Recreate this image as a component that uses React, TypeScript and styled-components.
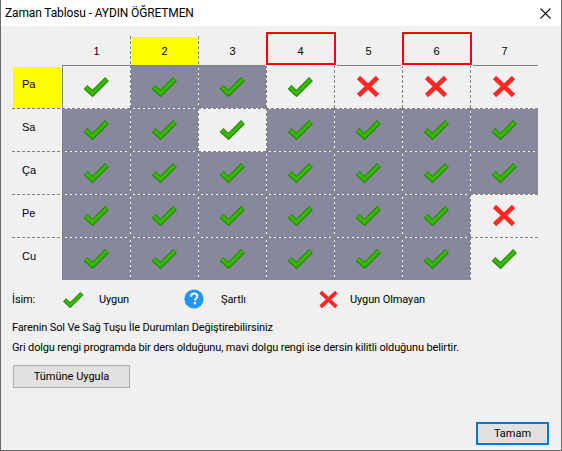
import React from 'react';
import styled, { createGlobalStyle } from 'styled-components';

const GlobalStyle = createGlobalStyle`
  html, body {
    margin: 0;
    padding: 0;
    background: #f0f0f0;
  }
`;

const DAYS = ['Pa', 'Sa', 'Ça', 'Pe', 'Cu'];
const HOURS = [1, 2, 3, 4, 5, 6, 7];

// g: check on grey, c: check on plain, x: red cross
const STATES = ['cggcxxx', 'ggcgggg', 'ggggggg', 'ggggggx', 'ggggggc'];

const dashedV = 'repeating-linear-gradient(to bottom, #808080 0 3px, #fff 3px 5px)';
const dashedH = 'repeating-linear-gradient(to right, #808080 0 3px, #fff 3px 5px)';
const dashedPlain = 'repeating-linear-gradient(to right, #808080 0 3px, #f0f0f0 3px 5px)';
const dashedHeader = 'repeating-linear-gradient(to bottom, #808080 0 3px, #f0f0f0 3px 5px)';
const solid = 'linear-gradient(#808080, #808080)';

const CheckIcon: React.FC<{ small?: boolean }> = ({ small }) => (
  <svg width={small ? 22 : 26} height={small ? 17 : 21} viewBox="0 0 26 21" fill="none">
    <path d="M2.5 11 L9.5 17.5 L24 3" stroke="#1f8a00" strokeWidth="5.4" />
    <path d="M3 11.2 L9.5 17.2 L23.6 3.4" stroke="#38b800" strokeWidth="3.2" />
  </svg>
);

const CrossIcon: React.FC<{ small?: boolean }> = ({ small }) => (
  <svg width={small ? 21 : 24} height={small ? 19 : 23} viewBox="0 0 24 23" fill="none">
    <path d="M2.5 2.5 L21.5 20.5 M21.5 2.5 L2.5 20.5" stroke="#ff2626" strokeWidth="4.6" />
  </svg>
);

const HelpIcon = () => (
  <svg width="20" height="20" viewBox="0 0 20 20">
    <circle cx="10" cy="10" r="9.6" fill="#2196f3" />
    <path
      d="M6.9 7.6 C7 5.6 8.4 4.6 10.2 4.6 C12 4.6 13.3 5.7 13.3 7.3 C13.3 9.4 10.9 9.6 10.9 11.6"
      fill="none"
      stroke="#fff"
      strokeWidth="2"
    />
    <rect x="9.7" y="13" width="2.3" height="2.3" fill="#fff" />
  </svg>
);

const App: React.FC = () => {
  return (
    <Dialog>
      <GlobalStyle />
      <TitleBar>
        <Title>Zaman Tablosu - AYDIN ÖĞRETMEN</Title>
        <CloseButton>
          <svg width="11" height="11" viewBox="0 0 11 11">
            <path d="M0.5 0.5 L10.5 10.5 M10.5 0.5 L0.5 10.5" stroke="#111" strokeWidth="1.1" />
          </svg>
        </CloseButton>
      </TitleBar>

      <Body>
        <Table>
          <Corner />
          {HOURS.map((hour) => (
            <HourCell key={hour} $selected={hour === 2}>
              <HourLabel $selected={hour === 2}>{hour}</HourLabel>
              {(hour === 4 || hour === 6) && <RedFrame />}
            </HourCell>
          ))}
          {DAYS.map((day, row) => (
            <React.Fragment key={day}>
              <DayCell $first={row === 0}>
                <DayLabel $selected={row === 0}>{day}</DayLabel>
              </DayCell>
              {STATES[row].split('').map((state, col) => (
                <Cell key={col} $row={row} $col={col} $grey={state === 'g'}>
                  {state === 'x' ? <CrossIcon /> : <CheckIcon />}
                </Cell>
              ))}
            </React.Fragment>
          ))}
        </Table>

        <Legend>
          <LegendText>İsim:</LegendText>
          <CheckIcon small />
          <LegendText>Uygun</LegendText>
          <HelpIcon />
          <LegendText>Şartlı</LegendText>
          <CrossIcon small />
          <LegendText>Uygun Olmayan</LegendText>
        </Legend>

        <Note>Farenin Sol Ve Sağ Tuşu İle Durumları Değiştirebilirsiniz</Note>
        <Note $second>Gri dolgu rengi programda bir ders olduğunu, mavi dolgu rengi ise dersin kilitli olduğunu belirtir.</Note>

        <ApplyButton>Tümüne Uygula</ApplyButton>

        <Footer>
          <OkButton>Tamam</OkButton>
        </Footer>
      </Body>
    </Dialog>
  );
};

const Dialog = styled.div`
  box-sizing: border-box;
  width: 562px;
  height: 451px;
  display: flex;
  flex-direction: column;
  border: 1px solid #6a6a6a;
  border-top: none;
  background: #f0f0f0;
  color: #000;
  font-family: Roboto, sans-serif;
  overflow: hidden;
`;

const TitleBar = styled.div`
  height: 26px;
  flex: none;
  display: flex;
  align-items: center;
  justify-content: space-between;
  padding: 0 10px 0 4px;
  background: #fff;
`;

const Title = styled.div`
  font-size: 12px;
  letter-spacing: -0.13px;
  margin-top: -1px;
`;

const CloseButton = styled.div`
  display: flex;
  align-items: center;
`;

const Body = styled.div`
  flex: 1;
  display: flex;
  flex-direction: column;
  padding: 10px 12px 5px 11px;
  min-height: 0;
`;

const Table = styled.div`
  display: grid;
  grid-template-columns: 50px repeat(7, 68px);
  grid-template-rows: 29px repeat(5, 43px);
  font-family: 'Liberation Sans', sans-serif;
  font-size: 11px;
`;

const Corner = styled.div``;

const HourCell = styled.div<{ $selected: boolean }>`
  position: relative;
  display: flex;
  padding: 1px 0 0 1px;
  ${({ $selected }) =>
    $selected &&
    `background: ${dashedHeader} left top/1px 100% no-repeat, ${dashedHeader} right top/1px 100% no-repeat;
     margin-right: -1px;
     padding-right: 2px;
     padding-left: 2px;`}
`;

const HourLabel = styled.div<{ $selected: boolean }>`
  flex: 1;
  display: flex;
  align-items: center;
  justify-content: center;
  background: ${({ $selected }) => ($selected ? '#ffff00' : 'transparent')};
`;

const RedFrame = styled.div`
  position: absolute;
  left: 0;
  top: -4px;
  width: 70px;
  height: 33px;
  box-sizing: border-box;
  border: 2px solid #f00;
  box-shadow: 0 0 0 1px #fff;
`;

const DayCell = styled.div<{ $first: boolean }>`
  display: flex;
  padding: 2px 1px 0 1px;
  background: ${({ $first }) => ($first ? 'none' : `${dashedPlain} left top/100% 1px no-repeat`)};
`;

const DayLabel = styled.div<{ $selected: boolean }>`
  flex: 1;
  padding: 0 0 7px 9px;
  display: flex;
  align-items: center;
  background: ${({ $selected }) => ($selected ? '#ffff00' : 'transparent')};
`;

const Cell = styled.div<{ $row: number; $col: number; $grey: boolean }>`
  display: flex;
  align-items: center;
  justify-content: center;
  background:
    ${({ $col }) => ($col === 0 ? solid : dashedV)} left top/1px 100% no-repeat,
    ${({ $row }) => ($row === 0 ? solid : dashedH)} left top/100% 1px no-repeat,
    ${({ $grey }) => ($grey ? '#88889c' : '#f0f0f0')};
`;

const Legend = styled.div`
  display: grid;
  grid-template-columns: 50px 37px 85px 37px 97px 32px auto;
  align-items: center;
  justify-items: start;
  margin-top: 9px;
  height: 20px;
`;

const LegendText = styled.span`
  font-size: 11px;
  letter-spacing: -0.1px;
`;

const Note = styled.div<{ $second?: boolean }>`
  font-size: 11px;
  letter-spacing: -0.14px;
  line-height: 14px;
  margin-top: ${({ $second }) => ($second ? '6px' : '12px')};
`;

const ButtonBase = styled.button`
  box-sizing: border-box;
  background: #e1e1e1;
  color: #000;
  font-family: inherit;
  font-size: 11px;
  padding: 0;
`;

const ApplyButton = styled(ButtonBase)`
  width: 117px;
  height: 23px;
  margin: 10px 0 0 1px;
  border: 1px solid #adadad;
`;

const Footer = styled.div`
  flex: 1;
  display: flex;
  justify-content: flex-end;
  align-items: flex-end;
`;

const OkButton = styled(ButtonBase)`
  width: 73px;
  height: 23px;
  border: 2px solid #0078d7;
`;

export default App;
